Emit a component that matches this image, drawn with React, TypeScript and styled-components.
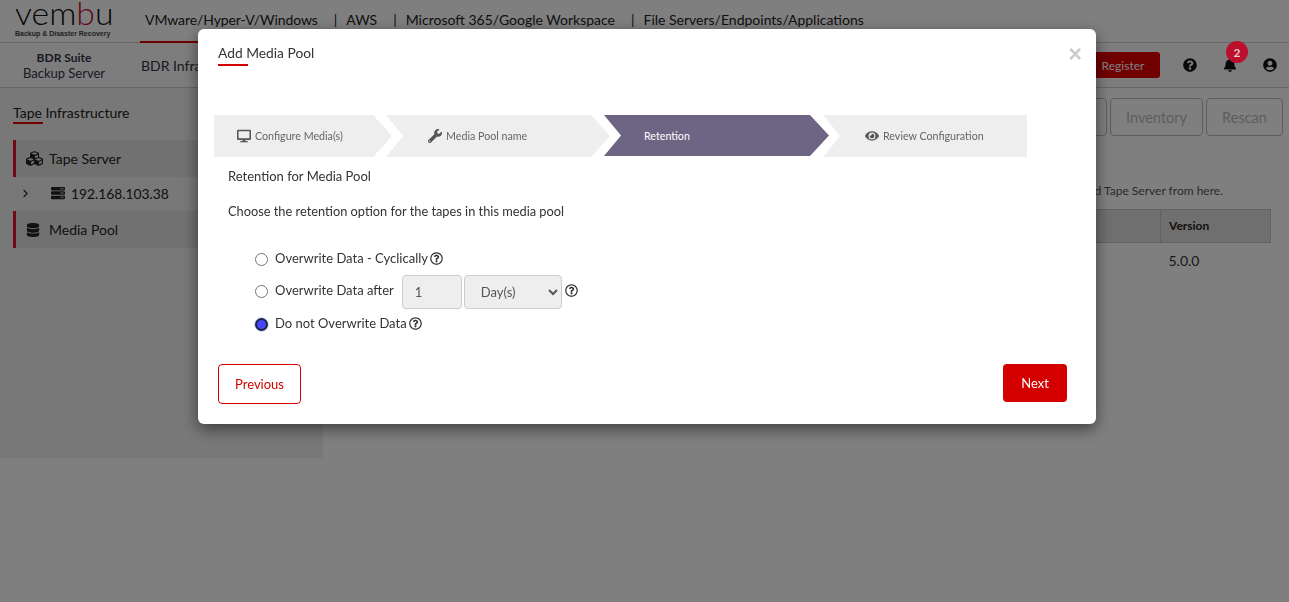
import React from "react";
import styled, { createGlobalStyle } from "styled-components";
import {
    FaBell, FaCubes, FaDatabase, FaDesktop, FaEye, FaQuestionCircle, FaRegQuestionCircle, FaServer, FaUserCircle, FaWrench,
} from "react-icons/fa";
import { FiChevronRight } from "react-icons/fi";

const GlobalStyle = createGlobalStyle`
html, body {
    margin: 0;
    padding: 0;
    height: 100%;
    background: #fff;
    font-family: Lato, "Noto Sans", sans-serif;
    color: #333;
    overflow: hidden;
}
* {
    box-sizing: border-box;
}
`;

const TopBar = styled.header`
display: flex;
align-items: stretch;
height: 43px;
border-bottom: 1px solid #ccc;
`;

const Logo = styled.div`
width: 140px;
padding: 0 0 0 15px;
display: flex;
flex-direction: column;
color: #111;
`;

const LogoWord = styled.div`
font-family: Lato, sans-serif;
font-weight: 300;
font-size: 31px;
line-height: 26px;
height: 29px;
transform-origin: left top;
transform: scaleX(1.09);

span {
    color: #c8102e;
}
`;

const LogoTag = styled.div`
font-family: "Liberation Sans", sans-serif;
font-size: 7px;
font-weight: 700;
line-height: 9px;
white-space: nowrap;
color: #444;
`;

const ProductNav = styled.nav`
display: flex;
align-items: stretch;
font-size: 14px;
`;

const ProductLink = styled.div<{ $active?: boolean }>`
display: flex;
align-items: center;
padding: 0 5px 3px 5px;
white-space: nowrap;
color: #222;
letter-spacing: ${props => props.$active ? "-0.08px" : "normal"};
border-bottom: 2px solid ${props => props.$active ? "#e00000" : "transparent"};
margin-bottom: -1px;
`;

const NavDivider = styled.span`
align-self: center;
padding: 0 4px 3px 11px;
color: #222;
`;

const SubBar = styled.div`
display: flex;
align-items: center;
height: 45px;
border-bottom: 1px solid #ccc;
background: #fbfbfb;
`;

const ServerTab = styled.div`
width: 128px;
padding-top: 1px;
text-align: center;
color: #334;
`;

const ServerTabTitle = styled.div`
font-size: 12px;
font-weight: 700;
line-height: 15px;
`;

const ServerTabName = styled.div`
font-size: 13px;
line-height: 17px;
`;

const SubLink = styled.div`
padding-left: 13px;
font-size: 14px;
color: #334;
`;

const SubActions = styled.div`
margin-left: auto;
display: flex;
align-items: center;
padding-right: 12px;
color: #111;
`;

const RegisterButton = styled.button`
width: 74px;
height: 26px;
margin-right: 23px;
background: #e00000;
color: #fff;
border: none;
border-radius: 3px;
font: 12px Lato, sans-serif;
`;

const ActionIcon = styled.span`
position: relative;
display: flex;
font-size: 14px;
margin-left: 26px;

&:first-of-type {
    margin-left: 0;
}
`;

const Badge = styled.span`
position: absolute;
top: -17px;
left: 3px;
z-index: 20;
width: 22px;
height: 22px;
border-radius: 50%;
background: #bd0f2c;
color: #e8c8cc;
font-size: 12px;
font-weight: 700;
display: flex;
align-items: center;
justify-content: center;
`;

const Page = styled.div`
display: grid;
grid-template-columns: 323px 1fr;
align-items: start;
`;

const Sidebar = styled.aside`
height: 370px;
background: #f0f0f0;
padding: 16px 0 0 13px;
`;

const SideHeading = styled.h2`
margin: 0 0 13px 0;
font-size: 14px;
font-weight: 400;
line-height: 18px;
color: #222;
position: relative;
padding-bottom: 3px;

&::after {
    content: "";
    display: block;
    width: 30px;
    height: 2px;
    background: #e00000;
}
`;

const SideGroup = styled.div`
display: flex;
align-items: center;
gap: 6px;
height: 37px;
padding-left: 10px;
border-left: 3px solid #e0102c;
background: #e2e2e2;
font-size: 14px;
color: #222;
margin-bottom: 1px;
`;

const SideNode = styled.div`
display: flex;
align-items: center;
height: 33px;
padding-bottom: 3px;
font-size: 13.8px;
color: #222;

svg:first-child {
    margin: 0 19px 0 6px;
}

svg:nth-child(2) {
    margin-right: 6px;
}
`;

const Content = styled.main`
padding: 10px 6px 0 16px;
`;

const Toolbar = styled.div`
display: flex;
justify-content: flex-end;
gap: 3px;
`;

const ToolButton = styled.button<{ $width: number }>`
width: ${props => props.$width}px;
height: 38px;
background: transparent;
border: 1px solid #bbb;
border-radius: 4px;
color: #bbb;
font: 14.5px Lato, sans-serif;
`;

const HintText = styled.p`
margin: 47px 60px 10px 0;
text-align: right;
font-size: 12px;
line-height: 16px;
color: #555;
`;

const TapeTable = styled.table`
width: calc(100% - 12px);
border-collapse: collapse;
font-size: 13px;

th {
    height: 33px;
    background: #dedede;
    border: 1px solid #c4c4c4;
    text-align: left;
    padding: 0 8px 2px 8px;
    font-size: 12px;
    color: #222;
}

td {
    height: 36px;
    padding: 0 8px;
    font-size: 14px;
    color: #333;
}
`;

const Backdrop = styled.div`
position: fixed;
inset: 0;
z-index: 10;
background: rgba(0, 0, 0, 0.5);
`;

const Modal = styled.section`
position: fixed;
z-index: 15;
left: 198px;
top: 29px;
width: 898px;
height: 395px;
background: #fff;
border-radius: 6px;
box-shadow: 0 5px 15px rgba(0, 0, 0, 0.5);
display: flex;
flex-direction: column;
padding: 0 29px 0 16px;
`;

const ModalHeader = styled.header`
display: flex;
justify-content: space-between;
align-items: flex-start;
height: 86px;
padding: 15px 0 0 4px;
`;

const ModalTitle = styled.h1`
margin: 0;
font-size: 13.8px;
font-weight: 400;
line-height: 18px;
color: #333;

&::after {
    content: "";
    display: block;
    width: 30px;
    height: 2px;
    margin-top: 2px;
    background: #d40000;
}
`;

const CloseButton = styled.button`
border: none;
background: none;
padding: 0;
margin-top: -3px;
margin-right: -15px;
font: 700 23px/26px "Liberation Sans", sans-serif;
color: #ccc;
`;

const Stepper = styled.ol`
display: flex;
margin: 0;
padding: 0;
list-style: none;
`;

const Step = styled.li<{ $width: number; $active?: boolean; $first?: boolean; $last?: boolean; $pad: number }>`
width: ${props => props.$width}px;
height: ${props => props.$active ? 41 : 42}px;
margin-left: ${props => props.$first ? 0 : -6}px;
padding: 0 0 1px ${props => props.$pad}px;
display: flex;
align-items: center;
gap: 4px;
font-size: 10.7px;
background: ${props => props.$active ? "#6d6583" : "#eeeeee"};
color: ${props => props.$active ? "#fff" : "#666"};
clip-path: polygon(
    0 0,
    ${props => props.$last ? "100% 0, 100% 100%" : "calc(100% - 19px) 0, 100% 50%, calc(100% - 19px) 100%"},
    0 100%
    ${props => props.$first ? "" : ", 17px 50%"}
);
`;

const StepIcon = styled.span`
display: flex;
font-size: 14px;
color: #555;
`;

const StepGap = styled.div`
height: 11px;
`;

const SectionText = styled.p<{ $gap: number; $tight?: boolean }>`
margin: 0 0 ${props => props.$gap}px 14px;
font-size: ${props => props.$tight ? 12.8 : 13}px;
line-height: 16px;
color: #333;
`;

const RetentionList = styled.div`
display: flex;
flex-direction: column;
margin: 26px 0 0 41px;
`;

const RetentionRow = styled.label<{ $height: number }>`
display: flex;
align-items: center;
height: ${props => props.$height}px;
font-size: 13px;
color: #333;
`;

const Radio = styled.input`
appearance: none;
width: 13px;
height: 13px;
margin: 2px 7px 0 0;
flex: none;
border-radius: 50%;
border: 1px solid #767676;
background: #fff;

&:checked {
    background: #4646ff;
    border: 2px solid #1c2340;
    box-shadow: 0 0 0 1px #d5e2ff;
}
`;

const HelpIcon = styled(FaRegQuestionCircle)<{ $gap?: number }>`
margin-left: ${props => props.$gap ?? 2}px;
font-size: 13px;
color: #333;
`;

const NumberBox = styled.input`
width: 60px;
height: 34px;
margin: 3px 2px 0 8px;
padding: 0 12px;
background: #eee;
border: 1px solid #ccc;
border-radius: 4px;
font: 13px Lato, sans-serif;
color: #555;
`;

const UnitSelect = styled.select`
width: 98px;
height: 34px;
margin-top: 3px;
padding: 0 0 0 12px;
background: #eee;
border: 1px solid #ccc;
border-radius: 4px;
font: 13px Lato, sans-serif;
color: #555;
`;

const ModalFooter = styled.footer`
display: flex;
justify-content: space-between;
align-items: flex-start;
margin-top: 27px;
padding-left: 4px;
`;

const PreviousButton = styled.button`
width: 83px;
height: 40px;
background: #fff;
border: 1px solid #d40000;
border-radius: 4px;
color: #d40000;
font: 13px Lato, sans-serif;
`;

const NextButton = styled.button`
width: 64px;
height: 38px;
background: #d40000;
border: none;
border-radius: 4px;
color: #fff;
font: 13px Lato, sans-serif;
`;

export default function App() {
    return (
        <>
            <GlobalStyle />
            <TopBar>
                <Logo>
                    <LogoWord>vem<span>b</span>u</LogoWord>
                    <LogoTag>Backup &amp; Disaster Recovery</LogoTag>
                </Logo>
                <ProductNav>
                    <ProductLink $active>VMware/Hyper-V/Windows</ProductLink>
                    <NavDivider>|</NavDivider>
                    <ProductLink>AWS</ProductLink>
                    <NavDivider>|</NavDivider>
                    <ProductLink>Microsoft 365/Google Workspace</ProductLink>
                    <NavDivider>|</NavDivider>
                    <ProductLink>File Servers/Endpoints/Applications</ProductLink>
                </ProductNav>
            </TopBar>
            <SubBar>
                <ServerTab>
                    <ServerTabTitle>BDR Suite</ServerTabTitle>
                    <ServerTabName>Backup Server</ServerTabName>
                </ServerTab>
                <SubLink>BDR Infrastructure</SubLink>
                <SubActions>
                    <RegisterButton>Register</RegisterButton>
                    <ActionIcon><FaQuestionCircle /></ActionIcon>
                    <ActionIcon>
                        <FaBell />
                        <Badge>2</Badge>
                    </ActionIcon>
                    <ActionIcon><FaUserCircle /></ActionIcon>
                </SubActions>
            </SubBar>
            <Page>
                <Sidebar>
                    <SideHeading>Tape Infrastructure</SideHeading>
                    <SideGroup><FaCubes size={17} />Tape Server</SideGroup>
                    <SideNode>
                        <FiChevronRight size={13} />
                        <FaServer size={14} />
                        192.168.103.38
                    </SideNode>
                    <SideGroup><FaDatabase size={14} style={{ marginRight: 3 }} />Media Pool</SideGroup>
                </Sidebar>
                <Content>
                    <Toolbar>
                        <ToolButton $width={90}>Add</ToolButton>
                        <ToolButton $width={93}>Inventory</ToolButton>
                        <ToolButton $width={77}>Rescan</ToolButton>
                    </Toolbar>
                    <HintText>You can add Tape Server from here.</HintText>
                    <TapeTable>
                        <thead>
                            <tr>
                                <th>Tape Server</th>
                                <th style={{ width: 110 }}>Version</th>
                            </tr>
                        </thead>
                        <tbody>
                            <tr>
                                <td>192.168.103.38</td>
                                <td>5.0.0</td>
                            </tr>
                        </tbody>
                    </TapeTable>
                </Content>
            </Page>
            <Backdrop />
            <Modal>
                <ModalHeader>
                    <ModalTitle>Add Media Pool</ModalTitle>
                    <CloseButton>×</CloseButton>
                </ModalHeader>
                <Stepper>
                    <Step $first $width={178} $pad={23}>
                        <StepIcon><FaDesktop /></StepIcon>
                        Configure Media(s)
                    </Step>
                    <Step $width={224} $pad={42}>
                        <StepIcon><FaWrench /></StepIcon>
                        Media Pool name
                    </Step>
                    <Step $active $width={225} $pad={40}>Retention</Step>
                    <Step $last $width={204} $pad={42}>
                        <StepIcon><FaEye /></StepIcon>
                        Review Configuration
                    </Step>
                </Stepper>
                <StepGap />
                <SectionText $gap={19}>Retention for Media Pool</SectionText>
                <SectionText $gap={0} $tight>Choose the retention option for the tapes in this media pool</SectionText>
                <RetentionList>
                    <RetentionRow $height={26}>
                        <Radio type="radio" name="retention" readOnly />
                        Overwrite Data - Cyclically
                        <HelpIcon />
                    </RetentionRow>
                    <RetentionRow $height={38}>
                        <Radio type="radio" name="retention" readOnly />
                        Overwrite Data after
                        <NumberBox value="1" readOnly />
                        <UnitSelect defaultValue="days">
                            <option value="days">Day(s)</option>
                        </UnitSelect>
                        <HelpIcon $gap={3} />
                    </RetentionRow>
                    <RetentionRow $height={28}>
                        <Radio type="radio" name="retention" defaultChecked />
                        Do not Overwrite Data
                        <HelpIcon />
                    </RetentionRow>
                </RetentionList>
                <ModalFooter>
                    <PreviousButton>Previous</PreviousButton>
                    <NextButton>Next</NextButton>
                </ModalFooter>
            </Modal>
        </>
    );
}
